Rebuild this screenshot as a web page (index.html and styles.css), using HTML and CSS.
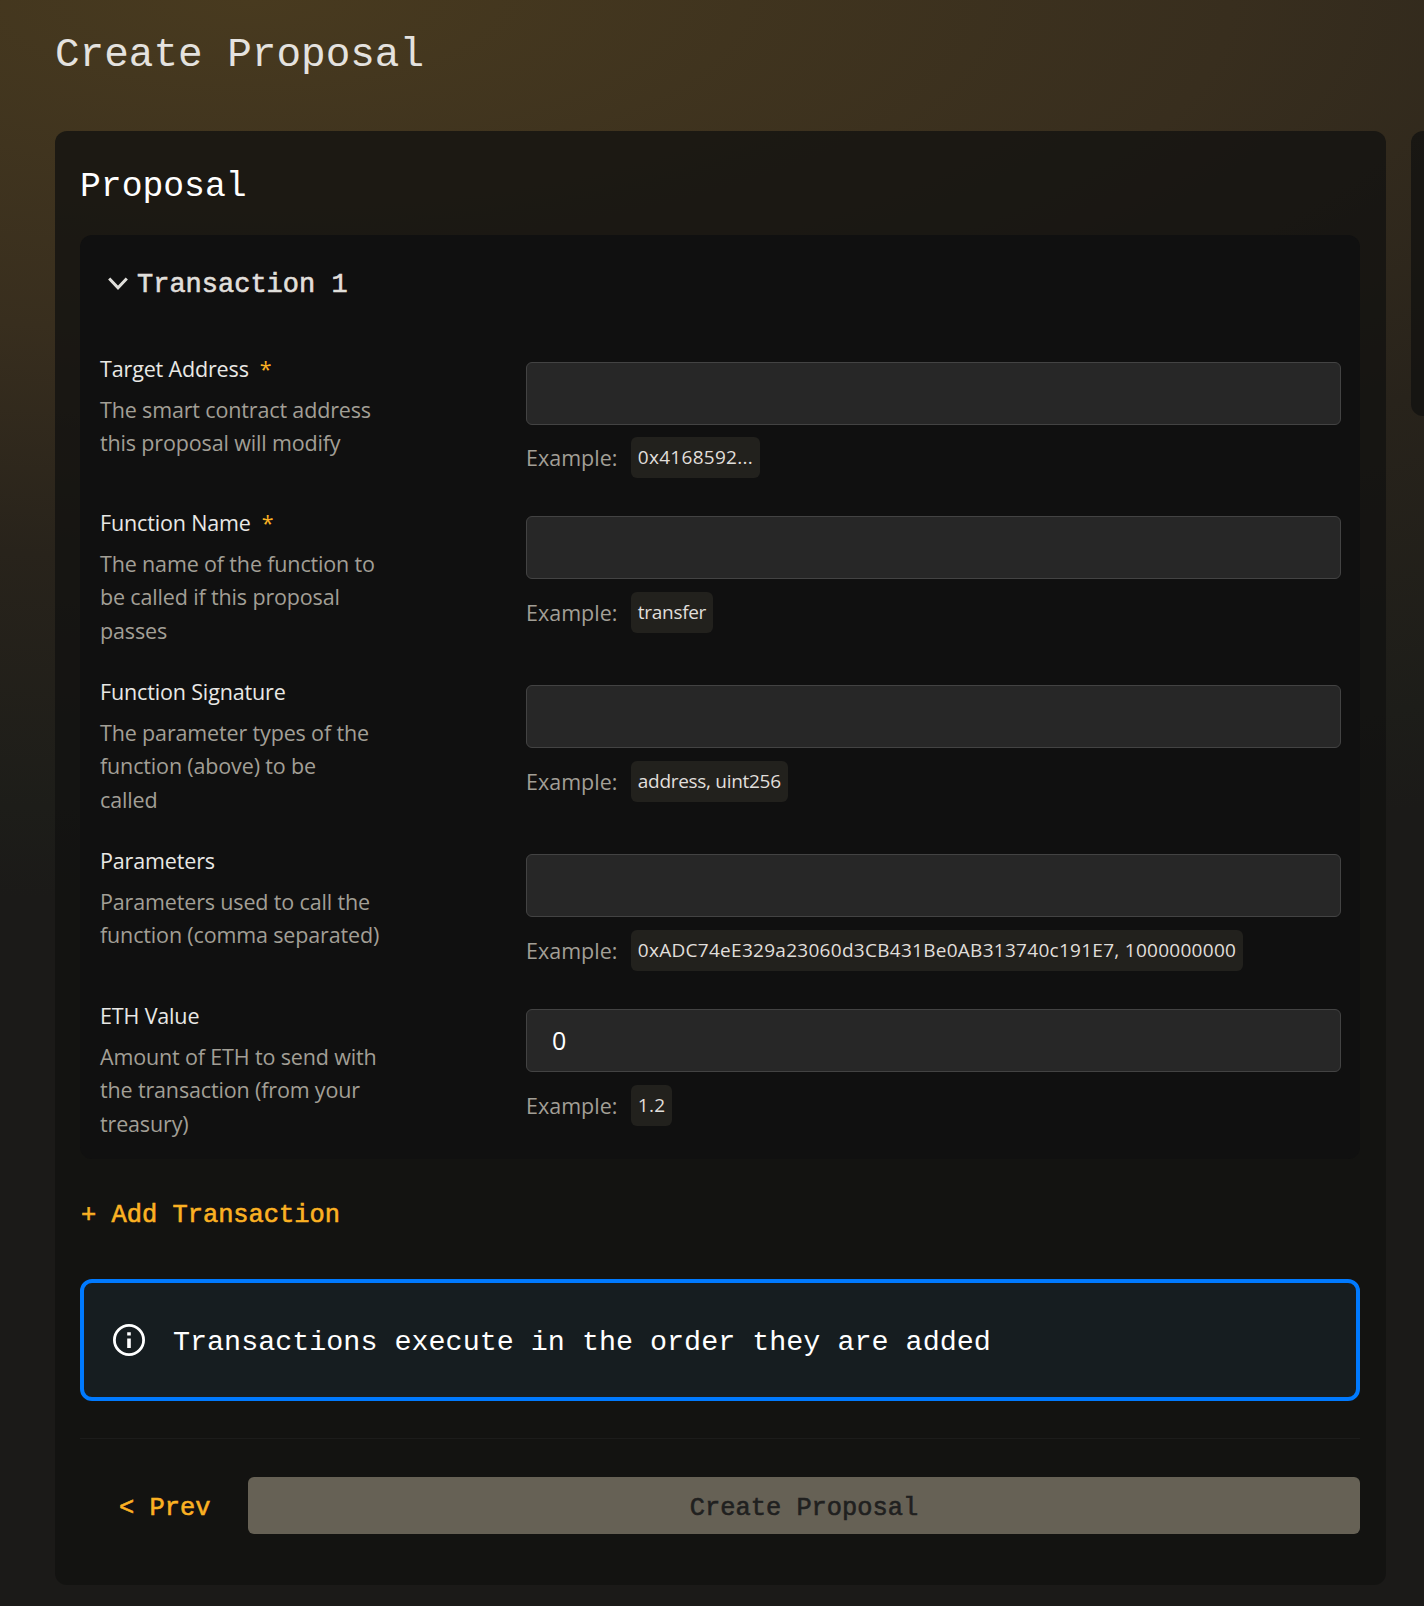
FILE: index.html
```html
<!DOCTYPE html>
<html lang="en">
<head>
<meta charset="utf-8">
<title>Create Proposal</title>
<link rel="stylesheet" href="styles.css">
</head>
<body>
<main class="page">
  <h1 class="page-title">Create Proposal</h1>
  <div class="columns">
    <section class="card proposal">
      <h2 class="card-title">Proposal</h2>
      <div class="transaction">
        <h3 class="transaction-title"><svg class="chevron" viewBox="0 0 20 14" fill="none" stroke="currentColor" stroke-width="3"><path d="M1.2 1.5 10 10.8 18.8 1.5"/></svg><span>Transaction 1</span></h3>
        <div class="fields">
          <div class="field">
            <div class="info"><div class="label">Target Address<span class="required">*</span></div><p class="help">The smart contract address this proposal will modify</p></div>
            <div class="entry"><input class="input" type="text"><div class="example">Example:<span class="badge badge-number">0x4168592...</span></div></div>
          </div>
          <div class="field">
            <div class="info"><div class="label">Function Name<span class="required">*</span></div><p class="help">The name of the function to be called if this proposal passes</p></div>
            <div class="entry"><input class="input" type="text"><div class="example">Example:<span class="badge">transfer</span></div></div>
          </div>
          <div class="field">
            <div class="info"><div class="label">Function Signature</div><p class="help">The parameter types of the function (above) to be<br>called</p></div>
            <div class="entry"><input class="input" type="text"><div class="example">Example:<span class="badge">address, uint256</span></div></div>
          </div>
          <div class="field">
            <div class="info"><div class="label">Parameters</div><p class="help">Parameters used to call the function (comma separated)</p></div>
            <div class="entry"><input class="input" type="text"><div class="example">Example:<span class="badge badge-number">0xADC74eE329a23060d3CB431Be0AB313740c191E7, 1000000000</span></div></div>
          </div>
          <div class="field">
            <div class="info"><div class="label">ETH Value</div><p class="help">Amount of ETH to send with the transaction (from your treasury)</p></div>
            <div class="entry"><input class="input" type="text" value="0"><div class="example">Example:<span class="badge badge-number">1.2</span></div></div>
          </div>
        </div>
      </div>
      <button class="link-button add">+ Add Transaction</button>
      <div class="notice">
        <svg class="notice-icon" viewBox="0 0 32 32" fill="none" stroke="currentColor"><circle cx="16" cy="16" r="14.6" stroke-width="2.8"/><path d="M16 14.5V24M16 8.2V11.4" stroke-width="3.6"/></svg>
        <span>Transactions execute in the order they are added</span>
      </div>
      <div class="actions">
        <button class="link-button prev">&lt; Prev</button>
        <button class="submit" disabled>Create Proposal</button>
      </div>
    </section>
    <aside class="card side"></aside>
  </div>
</main>
</body>
</html>
```
FILE: styles.css
```css
* { box-sizing: border-box; }

body {
  margin: 0;
  height: 1606px;
  overflow: hidden;
  background: #1b1a18 radial-gradient(ellipse 2650px 900px at 250px 0, #483a1f 0%, #382e1e 37%, #28231b 62%, #1d1d19 90%, #1b1a18 100%) no-repeat;
  color: #e0dfdb;
  font-family: "Open Sans", "Noto Sans", sans-serif;
}

h1, h2, h3, p { margin: 0; font-weight: 400; }

.page { padding: 35px 0 0 55px; }

.page-title, .card-title, .transaction-title, .link-button, .notice, .submit {
  font-family: "Liberation Mono", monospace;
}

.page-title {
  height: 96px;
  font-size: 41px;
  line-height: 40px;
  color: #e4e2df;
}

.columns { display: flex; align-items: flex-start; gap: 25px; }

.card { border-radius: 12px; background: rgba(17, 17, 16, 0.76); }

.proposal { flex: none; width: 1331px; height: 1454px; padding: 0 26px 0 25px; }

.side { flex: 1; height: 285px; border-radius: 12px 0 0 12px; }

.card-title {
  height: 104px;
  padding-top: 36px;
  font-size: 34.7px;
  line-height: 40px;
  color: #fff;
}

.transaction { height: 924px; padding: 30px 19px 0 20px; border-radius: 12px; background: #101010; }

.transaction-title {
  display: flex;
  align-items: center;
  gap: 9px;
  height: 40px;
  padding-left: 8px;
  font-size: 27px;
  -webkit-text-stroke: 0.6px currentColor;
}

.chevron { width: 20px; height: 14px; margin-top: -3px; }

.fields { display: grid; grid-template-rows: 154px 169px 169px 155px auto; padding-top: 46px; }

.field { display: grid; grid-template-columns: 426px 1fr; }

.info { width: 292px; padding-top: 0.5px; font-size: 21.5px; line-height: 33.2px; letter-spacing: -0.15px; }

.label { margin-bottom: 8.5px; color: #e9e8e5; }

.required { margin-left: 11px; color: #fbb123; }

.help { color: #a29f96; }

.entry { padding-top: 11px; }

.input {
  display: block;
  width: 100%;
  height: 63px;
  margin: 0;
  padding: 0 25px 2px;
  border: 1px solid #434343;
  border-radius: 6px;
  outline: 0;
  background: #272727;
  color: #fff;
  font: 25px "Open Sans", sans-serif;
}

.example { display: flex; align-items: center; gap: 13.5px; height: 41px; margin-top: 13px; font-size: 21.5px; color: #a29f96; white-space: nowrap; }

.field:first-child .example { margin-top: 12px; }

.badge { height: 41px; padding: 0 7px; border-radius: 6px; background: #22211d; color: #e0dfdb; font-size: 19px; line-height: 41px; letter-spacing: -0.3px; }

.badge-number { letter-spacing: 0.28px; }

.link-button, .submit { border: 0; padding: 0; font-size: 25.4px; -webkit-text-stroke: 0.6px currentColor; }

.link-button { background: none; color: #fbb123; }

.add { display: block; height: 40px; margin-top: 36px; padding-left: 1px; }

.notice {
  display: flex;
  align-items: center;
  gap: 28px;
  height: 122px;
  margin-top: 44px;
  padding-left: 29px;
  border: 4px solid #007aff;
  border-radius: 12px;
  background: #161d20;
  color: #fff;
  font-size: 28.4px;
}

.notice span { padding-top: 5px; }

.notice-icon { width: 32px; height: 32px; }

.actions { display: flex; height: 97px; margin-top: 37px; padding-top: 38px; border-top: 1px solid #1c1c1b; }

.prev { width: 168px; height: 61px; padding: 2px 0 0 39px; text-align: left; }

.submit { flex: 1; height: 57px; padding-top: 5px; border-radius: 6px; background: #666155; color: #20201f; }
```
